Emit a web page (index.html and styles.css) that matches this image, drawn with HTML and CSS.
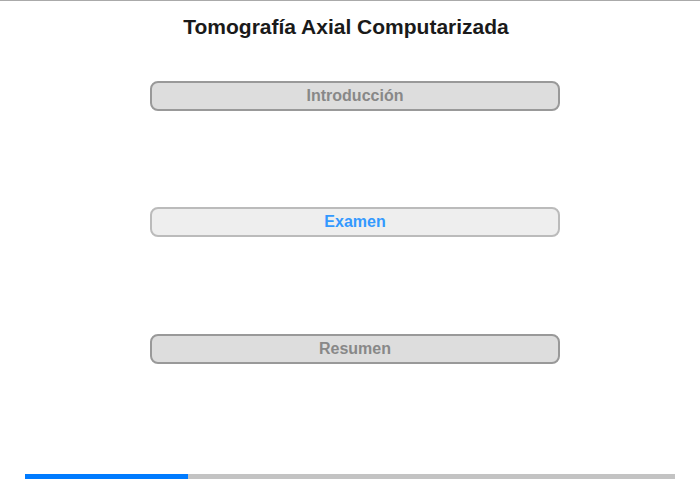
FILE: index.html
```html
<!DOCTYPE html>
<html lang="es">
<head>
    <meta charset="UTF-8">
    <meta name="viewport" content="width=device-width, initial-scale=1.0">
    <title>Tomografía Axial Computarizada</title>
    <link rel="stylesheet" href="styles.css">
</head>
<body>
    <div class="page">
        <h1 class="titulo">Tomografía Axial Computarizada</h1>

        <!-- Secciones del módulo -->
        <div class="menu">
            <button class="seccion">Introducción</button>
            <button class="seccion activa">Examen</button>
            <button class="seccion">Resumen</button>
        </div>

        <!-- Barra de progreso -->
        <div class="progreso">
            <div class="progreso-lleno" style="width: 25%"></div>
        </div>
    </div>
</body>
</html>
```

FILE: styles.css
```css
body {
    margin: 0;
    font-family: "Liberation Sans", Arial, sans-serif;
    background: white;
}
.page {
    height: 478px;
    border-top: 1px solid #aaaaaa;
    display: flex;
    flex-direction: column;
}
.titulo {
    margin: 0;
    padding: 14px 8px 0 0;
    font-size: 21px;
    line-height: 24px;
    text-align: center;
    color: #1a1a1a;
}
.menu {
    display: flex;
    flex-direction: column;
    align-items: center;
    gap: 96px;
    margin-top: 42px;
    padding-left: 10px;
}
.seccion {
    width: 410px;
    height: 30px;
    padding: 0;
    border: 2px solid #999999;
    border-radius: 8px;
    background: #dddddd;
    color: #888888;
    font-family: inherit;
    font-size: 16px;
    font-weight: bold;
    cursor: pointer;
}
.seccion:last-child {
    margin-top: 1px;
}
.seccion.activa {
    border-color: #bbbbbb;
    background: #eeeeee;
    color: #3399ff;
}
.progreso {
    margin: auto 25px 0;
    height: 5px;
    background: #c3c3c3;
}
.progreso-lleno {
    height: 100%;
    background: #007bff;
}
```
